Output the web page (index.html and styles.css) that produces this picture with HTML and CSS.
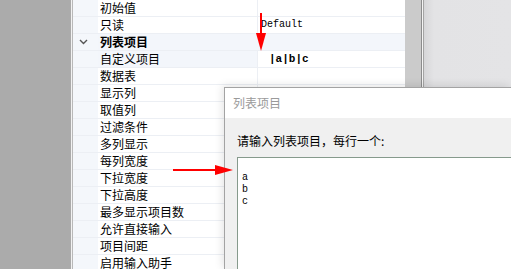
FILE: index.html
```html
<!DOCTYPE html>
<html lang="zh-CN">
<head>
  <meta charset="UTF-8" />
  <meta name="viewport" content="width=device-width, initial-scale=1" />
  <title>列表项目</title>
  <link rel="stylesheet" href="styles.css">
</head>
<body>
  <div class="screen">
    <div class="side"></div>
    <div class="edge"></div>

    <div class="grid">
      <div class="row"><span class="gutter"></span><span class="name">初始值</span><span class="value"></span></div>
      <div class="row"><span class="gutter"></span><span class="name">只读</span><span class="value">Default</span></div>
      <div class="row category">
        <span class="gutter">
          <svg width="9" height="6" viewBox="0 0 9 6"><path d="M1 1 L4.5 4.5 L8 1" fill="none" stroke="#555" stroke-width="1.4" /></svg>
        </span>
        <span class="name">列表项目</span><span class="value"></span>
      </div>
      <div class="row selected"><span class="gutter"></span><span class="name">自定义项目</span><span class="value items">|a|b|c</span></div>
      <div class="row"><span class="gutter"></span><span class="name">数据表</span><span class="value"></span></div>
      <div class="row"><span class="gutter"></span><span class="name">显示列</span><span class="value"></span></div>
      <div class="row"><span class="gutter"></span><span class="name">取值列</span><span class="value"></span></div>
      <div class="row"><span class="gutter"></span><span class="name">过滤条件</span><span class="value"></span></div>
      <div class="row"><span class="gutter"></span><span class="name">多列显示</span><span class="value"></span></div>
      <div class="row"><span class="gutter"></span><span class="name">每列宽度</span><span class="value"></span></div>
      <div class="row"><span class="gutter"></span><span class="name">下拉宽度</span><span class="value"></span></div>
      <div class="row"><span class="gutter"></span><span class="name">下拉高度</span><span class="value"></span></div>
      <div class="row"><span class="gutter"></span><span class="name">最多显示项目数</span><span class="value"></span></div>
      <div class="row"><span class="gutter"></span><span class="name">允许直接输入</span><span class="value"></span></div>
      <div class="row"><span class="gutter"></span><span class="name">项目间距</span><span class="value"></span></div>
      <div class="row last"><span class="gutter"></span><span class="name">启用输入助手</span><span class="value"></span></div>
    </div>

    <div class="scroll"></div>
    <div class="split"></div>
    <div class="backdrop"></div>
  </div>

  <div class="dialog">
    <div class="dialog-title">列表项目</div>
    <div class="dialog-body">
      <p class="prompt">请输入列表项目，每行一个:</p>
      <pre class="editor">a
b
c</pre>
    </div>
  </div>

  <!-- callout arrows -->
  <svg class="arrow arrow-down" width="12" height="40" viewBox="0 0 12 40">
    <rect x="5" y="0" width="2" height="21" fill="#f00" />
    <path d="M1 20 L11 20 L6 38 Z" fill="#f00" />
  </svg>
  <svg class="arrow arrow-right" width="62" height="12" viewBox="0 0 62 12">
    <rect x="0" y="5" width="44" height="2" fill="#f00" />
    <path d="M42 1 L42 11 L60 6 Z" fill="#f00" />
  </svg>
</body>
</html>
```

FILE: styles.css
```css
body {
  margin: 0;
  overflow: hidden;
  font-family: "Noto Sans CJK SC", "Noto Sans", sans-serif;
  font-size: 12px;
  color: #000;
}

.screen {
  display: flex;
  height: 269px;
  overflow: hidden;
}

.side {
  width: 71px;
  background: #ababab;
}

.edge {
  width: 1px;
  background: #f2f2f2;
  border-right: 1px solid #b8b8b8;
}

.grid {
  width: 332px;
  background: #fff;
}

.row {
  display: flex;
  height: 17px;
  box-sizing: border-box;
  border-bottom: 1px solid #eceff4;
  line-height: 16px;
}

/* the last row is cut by the window bottom */
.row.last {
  height: 14px;
  border-bottom: none;
  overflow: hidden;
}

.gutter {
  width: 25px;
  background: #f4f7fb;
  display: flex;
  align-items: center;
  justify-content: center;
  padding-right: 4px;
  box-sizing: border-box;
}

.name {
  width: 160px;
  padding-left: 2px;
  box-sizing: border-box;
  border-right: 1px solid #eceff4;
  white-space: nowrap;
  overflow: hidden;
}

.value {
  flex: 1;
  padding-left: 3px;
  font-family: "Liberation Mono", monospace;
  font-size: 10px;
}

.category {
  background: #f3f6fb;
}

.category .name {
  font-weight: bold;
  border-right-color: transparent;
}

.selected .name {
  background: #f3f6fb;
}

.items {
  padding-left: 11px;
  font-size: 11px;
  font-weight: bold;
}

.scroll {
  width: 16px;
  background: #cbcbcb;
  border-right: 1px solid #8c8c8c;
}

.split {
  width: 1px;
  background: #f4f4f4;
  border-right: 1px solid #a4a4a4;
}

.backdrop {
  flex: 1;
  background: linear-gradient(to right, #d6d6d8, #e3e3e5 10px, #e4e4e6);
}

.dialog {
  position: absolute;
  left: 224px;
  top: 87px;
  width: 286px;
  height: 182px;
  border: 1px solid #a3a3a3;
  border-right: none;
  border-bottom: none;
  background: #f0f0f0;
  box-shadow: -2px -2px 8px rgba(0, 0, 0, 0.1);
}

.dialog-title {
  height: 30px;
  line-height: 30px;
  padding-left: 8px;
  background: #fff;
  color: #9a9a9a;
  font-size: 12px;
}

.dialog-body {
  padding: 12px 0 0 12px;
}

.prompt {
  margin: 0 0 6px;
  line-height: 21px;
}

.editor {
  margin: 0;
  height: 98px;
  padding: 14px 4px 0;
  background: #fff;
  border: 1px solid #869a8c;
  border-right: none;
  border-bottom: none;
  font-family: "Liberation Mono", monospace;
  font-size: 10px;
  line-height: 12px;
}

.arrow {
  position: absolute;
}

.arrow-down {
  left: 255px;
  top: 13px;
}

.arrow-right {
  left: 173px;
  top: 164px;
}
```
